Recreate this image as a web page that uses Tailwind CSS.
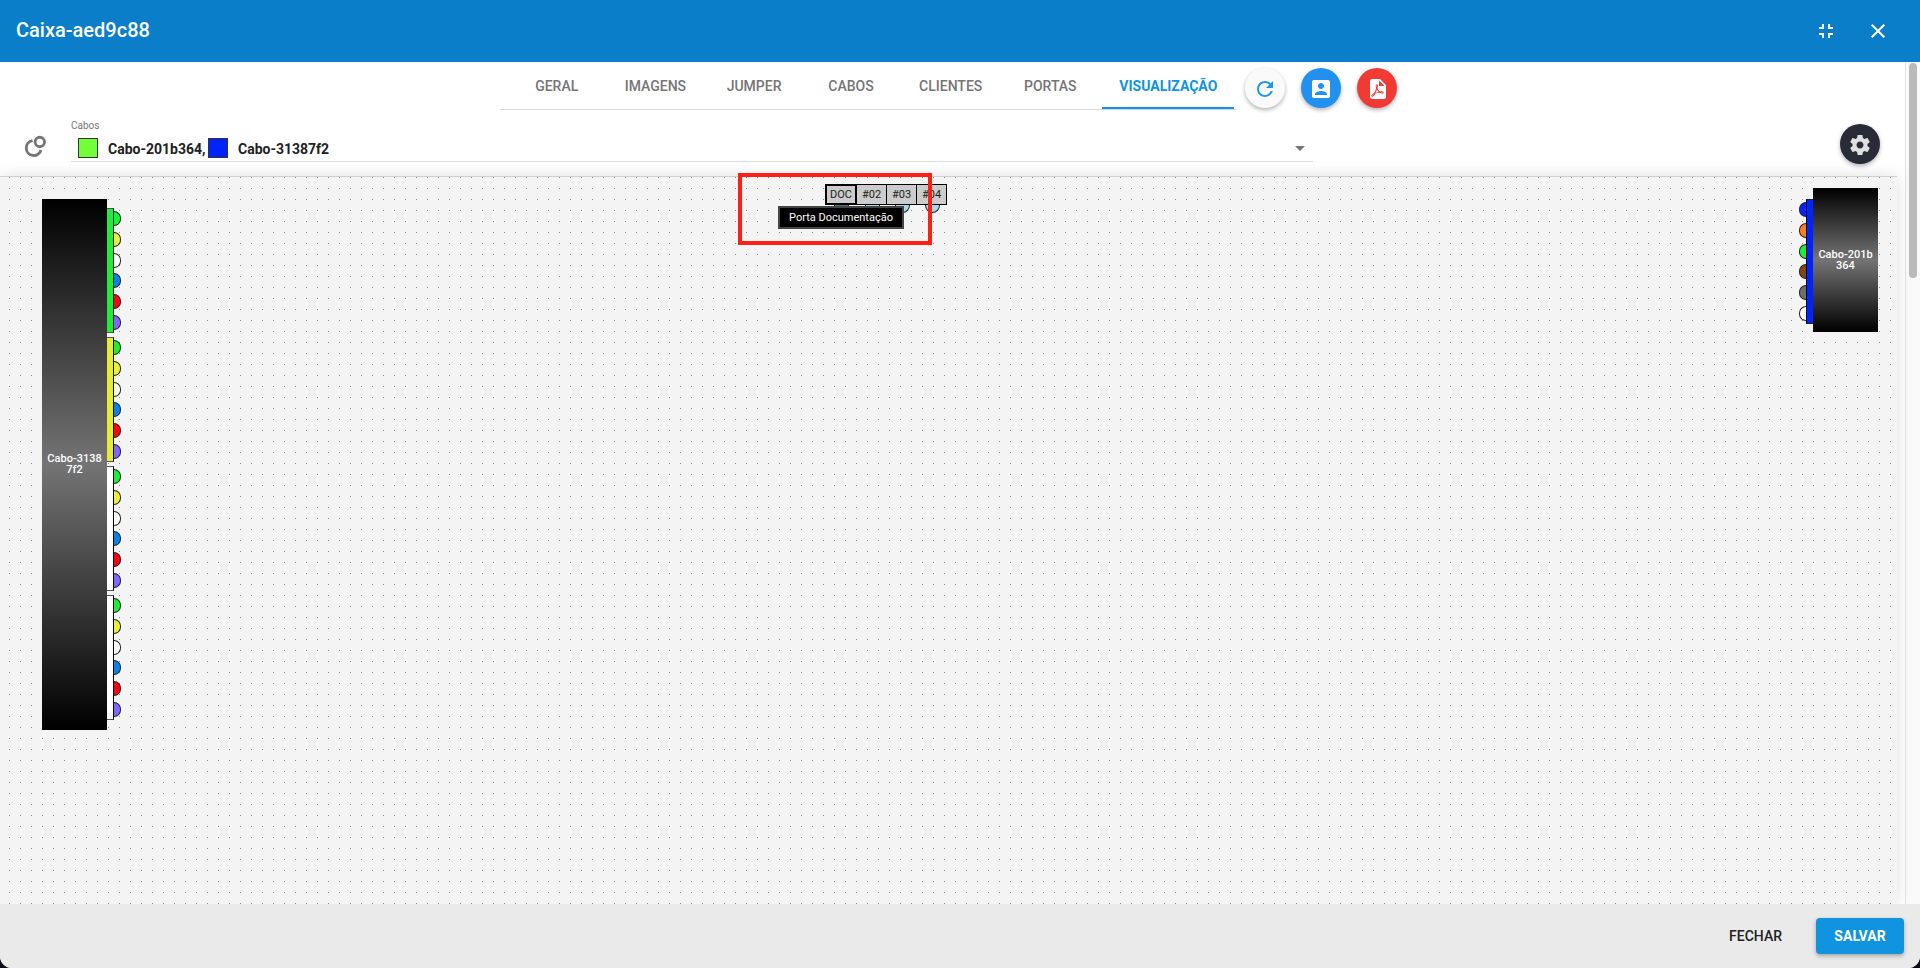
<!DOCTYPE html>
<html lang="pt-BR">
<head>
<meta charset="utf-8">
<meta name="viewport" content="width=device-width, initial-scale=1">
<title>Caixa-aed9c88</title>
<script src="https://cdn.jsdelivr.net/npm/@tailwindcss/browser@4"></script>
</head>
<body class="bg-[#0d0d18] font-['Roboto',sans-serif]">
<div class="flex h-screen flex-col overflow-hidden rounded-b-xl bg-white text-[#212121]">

  <header class="flex h-[62px] shrink-0 items-center bg-[#0a7ec8] px-4 text-white">
    <h1 class="grow pb-0.5 text-xl font-medium">Caixa-aed9c88</h1>
    <button type="button" aria-label="Restaurar" class="mr-7 size-6"><svg viewBox="0 0 24 24" fill="currentColor"><path d="M5 16h3v3h2v-5H5v2zm3-8H5v2h5V5H8v3zm6 11h2v-3h3v-2h-5v5zm2-11V5h-2v5h5V8h-3z"/></svg></button>
    <button type="button" aria-label="Fechar janela" class="mr-[14px] size-6"><svg viewBox="0 0 24 24" fill="currentColor"><path d="M19 6.41L17.59 5 12 10.59 6.41 5 5 6.41 10.59 12 5 17.59 6.41 19 12 13.41 17.59 19 19 17.59 13.41 12 19 6.41z"/></svg></button>
  </header>

  <div class="flex min-h-0 grow">
    <main class="mr-2 flex min-w-0 grow flex-col">
      <div class="flex h-[52px] shrink-0 justify-center gap-2">
        <nav role="tablist" class="mb-[4px] flex gap-[7px] border-b border-[#dcdcdc] pr-[3px] pl-3 text-sm font-medium text-[#757575]">
          <button type="button" role="tab" class="min-w-[90px] border-b-2 border-transparent px-4 pt-0.5">GERAL</button>
          <button type="button" role="tab" class="min-w-[90px] border-b-2 border-transparent px-4 pt-0.5">IMAGENS</button>
          <button type="button" role="tab" class="min-w-[90px] border-b-2 border-transparent px-4 pt-0.5">JUMPER</button>
          <button type="button" role="tab" class="min-w-[90px] border-b-2 border-transparent px-4 pt-0.5">CABOS</button>
          <button type="button" role="tab" class="min-w-[90px] border-b-2 border-transparent px-4 pt-0.5">CLIENTES</button>
          <button type="button" role="tab" class="min-w-[90px] border-b-2 border-transparent px-4 pt-0.5">PORTAS</button>
          <button type="button" role="tab" aria-selected="true" class="w-[132px] border-b-2 border-[#1094df] pt-0.5 font-bold text-[#1094df]">VISUALIZAÇÃO</button>
        </nav>
        <div class="flex gap-4 pt-[6px]">
          <button type="button" aria-label="Atualizar" class="flex size-10 items-center justify-center rounded-full bg-[#fafafa] pt-0.5 text-[#1a9ae8] shadow-[0_2px_4px_rgba(0,0,0,0.3)]"><svg class="size-6" viewBox="0 0 24 24" fill="currentColor"><path d="M17.65 6.35C16.2 4.9 14.21 4 12 4c-4.42 0-7.99 3.58-7.99 8s3.57 8 7.99 8c3.73 0 6.84-2.55 7.73-6h-2.08c-.82 2.33-3.04 4-5.65 4-3.31 0-6-2.69-6-6s2.69-6 6-6c1.66 0 3.14.69 4.22 1.78L13 11h7V4l-2.35 2.35z"/></svg></button>
          <button type="button" aria-label="Clientes" class="flex size-10 items-center justify-center rounded-full bg-[#2190ee] pt-0.5 text-white shadow-[0_2px_4px_rgba(0,0,0,0.3)]"><svg class="size-6" viewBox="0 0 24 24" fill="currentColor"><path d="M3 5v14c0 1.1.89 2 2 2h14c1.1 0 2-.9 2-2V5c0-1.1-.9-2-2-2H5c-1.11 0-2 .9-2 2zm12 4c0 1.66-1.34 3-3 3s-3-1.34-3-3 1.34-3 3-3 3 1.340 3 3zm-9 8c0-2 4-3.100 6-3.100s6 1.100 6 3.100v1H6v-1z"/></svg></button>
          <button type="button" aria-label="Exportar PDF" class="flex size-10 items-center justify-center rounded-full bg-[#f23a35] pt-0.5 text-white shadow-[0_2px_4px_rgba(0,0,0,0.3)]"><svg class="size-6" viewBox="0 0 24 24" fill="currentColor"><path fill-rule="evenodd" d="M14,9H19.5L14,3.5V9M7,2H15L21,8V20A2,2 0 0,1 19,22H7C5.89,22 5,21.1 5,20V4A2,2 0 0,1 7,2M11.93,12.44C12.34,13.34 12.86,14.08 13.46,14.59L13.87,14.91C13,15.07 11.8,15.35 10.53,15.84V15.84L10.42,15.88L10.92,14.84C11.37,13.97 11.7,13.18 11.93,12.44M18.41,16.25C18.59,16.07 18.68,15.84 18.69,15.59C18.72,15.39 18.67,15.2 18.57,15.04C18.28,14.57 17.53,14.35 16.29,14.35L15,14.42L14.13,13.84C13.5,13.32 12.93,12.41 12.53,11.28L12.57,11.14C12.9,9.81 13.21,8.2 12.55,7.54C12.39,7.38 12.17,7.3 11.94,7.3H11.7C11.33,7.3 11,7.69 10.91,8.07C10.54,9.4 10.76,10.13 11.13,11.34V11.35C10.88,12.23 10.56,13.25 10.05,14.28L9.09,16.08L8.2,16.57C7,17.32 6.43,18.16 6.32,18.69C6.28,18.88 6.3,19.05 6.37,19.23L6.4,19.28L6.88,19.59L7.32,19.7C8.13,19.7 9.05,18.75 10.29,16.63L10.47,16.56C11.5,16.23 12.78,16 14.5,15.81C15.53,16.32 16.74,16.55 17.5,16.55C17.94,16.55 18.24,16.44 18.41,16.25M18,15.54L18.09,15.65C18.08,15.75 18.05,15.76 18,15.78H17.96L17.77,15.8C17.31,15.8 16.6,15.61 15.87,15.29C15.96,15.19 16,15.19 16.1,15.19C17.5,15.19 17.9,15.44 18,15.54M8.83,17C8.18,18.19 7.59,18.85 7.14,19C7.19,18.62 7.64,17.96 8.35,17.31L8.83,17M11.85,10.09C11.62,9.19 11.61,8.46 11.78,8.04L11.85,7.92L12,7.97C12.17,8.21 12.19,8.53 12.09,9.07L12.06,9.23L11.9,10.05L11.85,10.09Z"/></svg></button>
        </div>
      </div>

      <div class="flex h-[62px] shrink-0 items-start pr-[17px] pl-6">
        <button type="button" aria-label="Fusões" class="mt-[21px] mr-6 size-[23px] text-[#757575]"><svg viewBox="0 0 23 23" fill="none" stroke="currentColor" stroke-width="2.900"><circle cx="15.800" cy="7" r="4.700"/><path d="M8.500 5.600A7.500 7.500 0 1 0 17 15"/></svg></button>
        <div class="w-[1242px] border-b border-[#dcdcdc] pt-[5px]">
          <label for="cabos" class="block h-[13px] text-[10px] leading-[13px] text-[#757575]">Cabos</label>
          <div class="grid h-[29px] items-end">
            <select id="cabos" class="col-start-1 row-start-1 h-7 w-full appearance-none bg-transparent outline-none"><option aria-label="Cabo-201b364, Cabo-31387f2"></option></select>
            <div class="pointer-events-none col-start-1 row-start-1 flex items-center gap-[5px] pb-0.5 pl-[7px] text-sm font-bold">
              <span class="flex w-[125px] items-center gap-[10px]"><span class="size-5 shrink-0 border border-[#333] bg-[#72ff38]"></span><span class="pt-0.5 whitespace-nowrap">Cabo-201b364,</span></span>
              <span class="flex w-[125px] items-center gap-[10px]"><span class="size-5 shrink-0 border border-[#333] bg-[#0024ff]"></span><span class="pt-0.5 whitespace-nowrap">Cabo-31387f2</span></span>
              <svg class="mr-2 ml-auto h-[5px] w-[10px]" viewBox="0 0 10 5" fill="#757575"><path d="M0 0h10L5 5z"/></svg>
            </div>
          </div>
        </div>
        <button type="button" aria-label="Configurações" class="mt-[10px] ml-auto flex size-10 items-center justify-center rounded-full bg-[#282c37] pt-0.5 text-[#e0e0e0] shadow-[0_2px_4px_rgba(0,0,0,0.3)]"><svg class="size-6" viewBox="0 0 24 24" fill="currentColor"><path d="M19.430 12.980c.04-.32.07-.64.07-.98s-.03-.66-.07-.98l2.110-1.650c.19-.15.24-.42.12-.64l-2-3.460c-.12-.22-.39-.3-.61-.22l-2.490 1c-.52-.4-1.080-.73-1.690-.98l-.38-2.650C14.460 2.180 14.250 2 14 2h-4c-.25 0-.46.18-.49.42l-.38 2.650c-.61.25-1.170.59-1.690.98l-2.490-1c-.23-.09-.49 0-.61.22l-2 3.460c-.13.22-.07.49.12.64l2.110 1.650c-.04.32-.07.65-.07.98s.03.66.07.98l-2.110 1.650c-.19.15-.24.42-.12.64l2 3.460c.12.22.39.3.61.22l2.490-1c.52.4 1.080.73 1.690.98l.38 2.650c.03.24.24.42.49.42h4c.25 0 .46-.18.49-.42l.38-2.650c.61-.25 1.170-.59 1.690-.98l2.490 1c.23.09.49 0 .61-.22l2-3.460c.12-.22.07-.49-.12-.64l-2.110-1.650zM12 15.500c-1.930 0-3.500-1.570-3.500-3.500s1.570-3.500 3.500-3.500 3.500 1.570 3.500 3.500-1.570 3.500-3.500 3.500z"/></svg></button>
      </div>

      <section aria-label="Diagrama" class="relative grow border-t border-[#d0d0d0] bg-[#f4f4f4] bg-[linear-gradient(#f4f4f4_10px,transparent_10px),linear-gradient(90deg,#8c8c8c_1px,#f4f4f4_1px)] bg-[length:11px_11px] bg-[position:9px_1px] shadow-[0_0_14px_rgba(0,0,0,0.13)]">

        <div class="absolute top-[22px] left-[42px] flex">
          <div class="flex h-[531px] w-[65px] items-center justify-center bg-linear-to-b/srgb from-black via-[#747474] to-black pb-0.5 text-center text-[11px] leading-[11px] font-medium text-white">Cabo-3138<br>7f2</div>
          <div id="tubes" class="flex flex-col gap-1 pt-[9px]"></div>
        </div>

        <div class="absolute top-[11px] right-[19px] flex">
          <div id="right-tubes" class="flex flex-col pt-[11px]"></div>
          <div class="flex h-36 w-[65px] items-center justify-center bg-linear-to-b/srgb from-black via-[#747474] to-black text-center text-[11px] leading-[11px] font-medium text-white">Cabo-201b<br>364</div>
        </div>

        <div class="absolute top-[7px] left-[825px] flex text-[11px] leading-none">
          <div class="flex flex-col items-center"><span class="flex h-[21px] w-8 items-center justify-center border-2 border-black bg-[#ccc]">DOC</span><span class="h-2 w-[15px] rounded-b-full border border-t-0 border-[#222] bg-[#4f7480]"></span></div>
          <div class="flex flex-col items-center"><span class="flex h-[21px] w-[30px] items-center justify-center border-y border-r border-black bg-[#ccc]">#02</span><span class="h-2 w-[15px] rounded-b-full border border-t-0 border-[#222] bg-[#a5d8e8]"></span></div>
          <div class="flex flex-col items-center"><span class="flex h-[21px] w-[30px] items-center justify-center border-y border-r border-black bg-[#ccc]">#03</span><span class="h-2 w-[15px] rounded-b-full border border-t-0 border-[#222] bg-[#a5d8e8]"></span></div>
          <div class="flex flex-col items-center"><span class="flex h-[21px] w-[30px] items-center justify-center border-y border-r border-black bg-[#ccc]">#04</span><span class="h-2 w-[15px] rounded-b-full border border-t-0 border-[#222] bg-[#a5d8e8]"></span></div>
        </div>
        <div role="tooltip" class="absolute top-[29px] left-[778px] flex h-[23px] w-[126px] items-center justify-center border-2 border-[#444] bg-black pt-0.5 text-[11px] whitespace-nowrap text-white">Porta Documentação</div>
        <div class="absolute -top-1 left-[738px] h-[72px] w-[194px] border-4 border-[#ff2015]"></div>
      </section>
    </main>

    <div class="flex w-[15px] shrink-0 justify-center border-l border-[#e2e2e2] bg-[#fafafa] pt-px">
      <div class="h-[215px] w-2 rounded-full bg-[#bababa]"></div>
    </div>
  </div>

  <footer class="z-10 flex h-16 shrink-0 items-center justify-end gap-[18px] bg-[#eaeaea] pr-4 text-sm font-medium">
    <button type="button" class="h-9 px-4">FECHAR</button>
    <button type="button" class="h-9 w-[88px] rounded bg-[#1094df] font-bold text-white shadow-[0_2px_4px_rgba(0,0,0,0.3)]">SALVAR</button>
  </footer>
</div>

<script>
  // One entry per tube: its jacket colour and the colours of its fibres.
  const fibres = ['#1fee38', '#ebee3a', '#fffffb', '#0a82e8', '#ff0016', '#8068ff'];
  const left = ['#1fee38', '#e6ec36', '#ffffff', '#ffffff'];
  document.getElementById('tubes').innerHTML = left.map(c => `
    <div class="flex h-[125px]">
      <div class="w-[7px] border-y border-r border-y-[#555] border-r-black" style="background:${c}"></div>
      <div class="flex flex-col justify-between py-[3px]">${fibres.map(f => `<i class="h-[15px] w-[7px] rounded-r-full border border-l-0 border-[#222]" style="background:${f}"></i>`).join('')}</div>
    </div>`).join('');
  const right = ['#0024ff', '#ff7f1f', '#1fee38', '#7d4519', '#6c706c', '#ffffff'];
  document.getElementById('right-tubes').innerHTML = `
    <div class="flex h-[125px]">
      <div class="flex flex-col justify-between py-[3px]">${right.map(f => `<i class="h-[15px] w-[7px] rounded-l-full border border-r-0 border-[#222]" style="background:${f}"></i>`).join('')}</div>
      <div class="w-[7px] border-y border-l border-y-[#222] border-l-black" style="background:#0024ff"></div>
    </div>`;
</script>
</body>
</html>
